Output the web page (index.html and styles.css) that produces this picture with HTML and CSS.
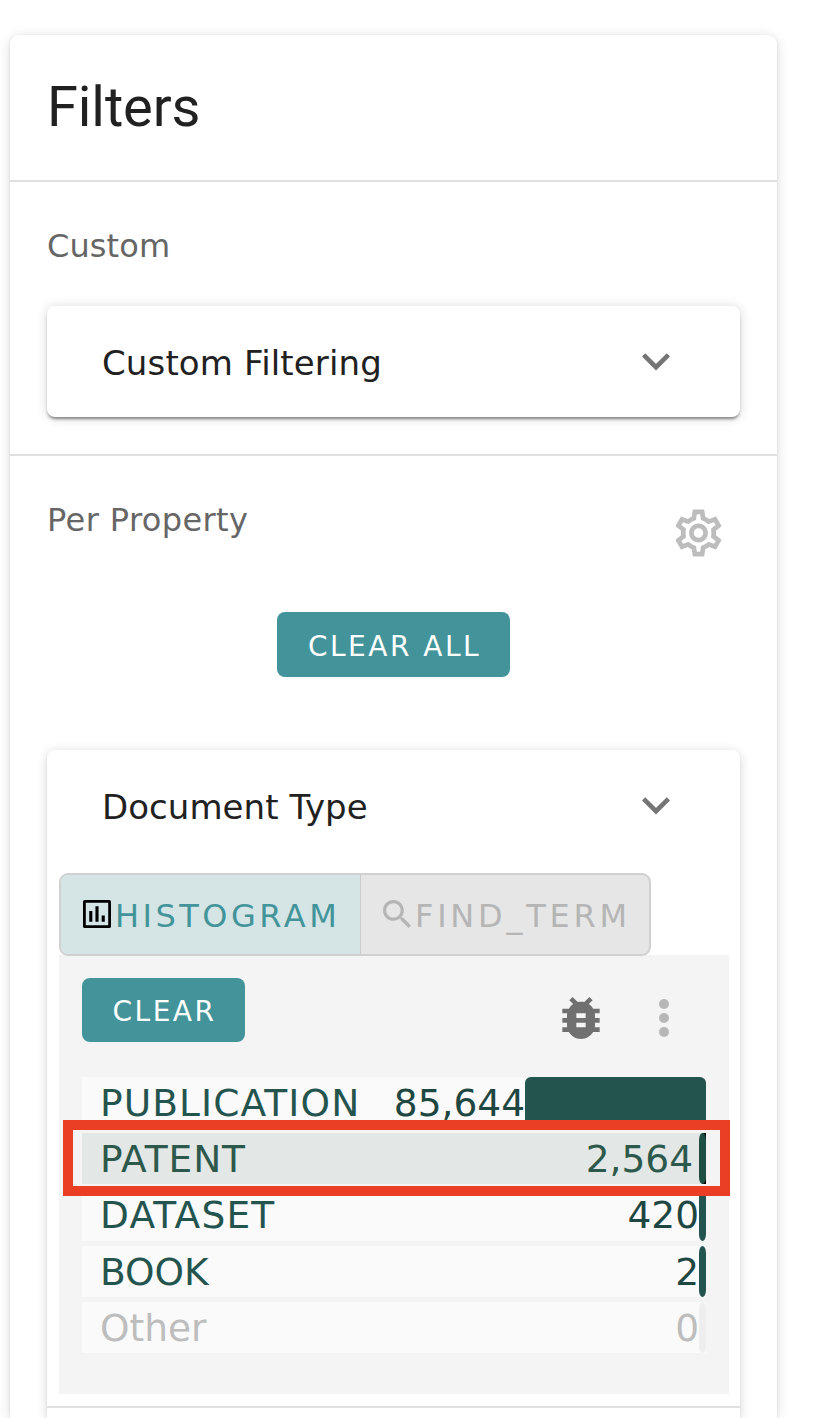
FILE: index.html
```html
<!DOCTYPE html>
<html lang="en">
<head>
<meta charset="utf-8">
<title>Filters</title>
<link rel="stylesheet" href="styles.css">
</head>
<body>
<main class="filters">
  <header class="filters-header"><h1 class="title">Filters</h1></header>
  <section class="section custom">
    <h2 class="label"><span class="t-custom">Custom</span></h2>
    <div class="card closed">
      <div class="card-head"><span class="t-cf">Custom Filtering</span>
        <svg class="chevron" viewBox="0 0 28 18"><path d="M1.6 1.8 14 14.2 26.4 1.8" fill="none" stroke="#757575" stroke-width="4.6"/></svg>
      </div>
    </div>
  </section>
  <section class="section property">
    <div class="property-head">
      <h2 class="label"><span class="t-pp">Per Property</span></h2>
      <svg class="gear" viewBox="2 2 20 20" fill="#bdbdbd"><path d="M19.43 12.98c.04-.32.07-.64.07-.98s-.03-.66-.07-.98l2.11-1.65c.19-.15.24-.42.12-.64l-2-3.46c-.09-.16-.26-.25-.44-.25-.06 0-.12.01-.17.03l-2.49 1c-.52-.4-1.08-.73-1.69-.98l-.38-2.65C14.46 2.18 14.25 2 14 2h-4c-.25 0-.46.18-.49.42l-.38 2.65c-.61.25-1.17.59-1.69.98l-2.49-1c-.06-.02-.12-.03-.18-.03-.17 0-.34.09-.43.25l-2 3.46c-.13.22-.07.49.12.64l2.11 1.65c-.04.32-.07.65-.07.98s.03.66.07.98l-2.11 1.65c-.19.15-.24.42-.12.64l2 3.46c.09.16.26.25.44.25.06 0 .12-.01.17-.03l2.49-1c.52.4 1.08.73 1.69.98l.38 2.65c.03.24.24.42.49.42h4c.25 0 .46-.18.49-.42l.38-2.65c.61-.25 1.17-.59 1.69-.98l2.49 1c.06.02.12.03.18.03.17 0 .34-.09.43-.25l2-3.46c.12-.22.07-.49-.12-.64l-2.11-1.65zm-1.98-1.71c.04.31.05.52.05.73s-.02.43-.05.73l-.14 1.13.89.7 1.08.84-.7 1.21-1.27-.51-1.04-.42-.9.68c-.43.32-.84.56-1.25.73l-1.06.43-.16 1.13-.2 1.35h-1.4l-.19-1.35-.16-1.13-1.06-.43c-.43-.18-.83-.41-1.23-.71l-.91-.7-1.06.43-1.27.51-.7-1.21 1.08-.84.89-.7-.14-1.13c-.03-.31-.05-.54-.05-.74s.02-.43.05-.73l.14-1.13-.89-.7-1.08-.84.7-1.21 1.27.51 1.04.42.9-.68c.43-.32.84-.56 1.25-.73l1.06-.43.16-1.13.2-1.35h1.39l.19 1.35.16 1.13 1.06.43c.43.18.83.41 1.23.71l.91.7 1.06-.43 1.27-.51.7 1.21-1.07.85-.89.7.14 1.13zM12 8c-2.21 0-4 1.79-4 4s1.79 4 4 4 4-1.79 4-4-1.79-4-4-4zm0 6c-1.1 0-2-.9-2-2s.9-2 2-2 2 .9 2 2-.9 2-2 2z"/></svg>
    </div>
    <button class="btn clear-all">CLEAR ALL</button>
    <div class="card open">
      <div class="card-head"><span class="t-dt">Document Type</span>
        <svg class="chevron" viewBox="0 0 28 18"><path d="M1.6 1.8 14 14.2 26.4 1.8" fill="none" stroke="#757575" stroke-width="4.6"/></svg>
      </div>
      <div class="tabs">
        <div class="tab active"><svg class="ti" viewBox="3 3 18 18"><path fill-rule="evenodd" d="M4.2 3h15.6Q21 3 21 4.2v15.6q0 1.2-1.2 1.2H4.2Q3 21 3 19.8V4.2Q3 3 4.2 3zM4.8 4.8v14.4h14.4V4.8zM7 10h2v7H7zM11 7h2v10h-2zM15 13h2v4h-2z"/></svg><span class="t-hi">HISTOGRAM</span></div>
        <div class="tab idle"><svg class="ti" viewBox="3 3 17.5 17.5" fill="#b5b5b5"><path d="M15.5 14h-.79l-.28-.27C15.41 12.59 16 11.11 16 9.5 16 5.91 13.09 3 9.5 3S3 5.91 3 9.5 5.91 16 9.5 16c1.61 0 3.09-.59 4.23-1.57l.27.28v.79l5 4.99L20.49 19l-4.99-5zm-6 0C7.01 14 5 11.99 5 9.5S7.01 5 9.5 5 14 7.01 14 9.5 11.99 14 9.5 14z"/></svg><span class="t-ft">FIND_TERM</span></div>
      </div>
      <div class="facet">
        <div class="toolbar">
          <button class="btn clear">CLEAR</button>
          <svg class="bug" viewBox="4 3 16 18" fill="#707070"><path d="M20 8h-2.81c-.45-.78-1.07-1.45-1.82-1.96L17 4.41 15.59 3l-2.17 2.17C12.96 5.06 12.49 5 12 5s-.96.06-1.41.17L8.41 3 7 4.41l1.62 1.63C7.88 6.55 7.26 7.22 6.81 8H4v2h2.09c-.05.33-.09.66-.09 1v1H4v2h2v1c0 .34.04.67.09 1H4v2h2.81c1.04 1.79 2.97 3 5.19 3s4.15-1.21 5.19-3H20v-2h-2.09c.05-.33.09-.66.09-1v-1h2v-2h-2v-1c0-.34-.04-.67-.09-1H20V8zm-6 8h-4v-2h4v2zm0-4h-4v-2h4v2z"/></svg>
          <svg class="dots" viewBox="0 0 10 38" fill="#b7b7b7"><circle cx="5" cy="5" r="5"/><circle cx="5" cy="19" r="5"/><circle cx="5" cy="33" r="5"/></svg>
        </div>
        <div class="rows">
          <div class="row"><span class="name n1">PUBLICATION</span><span class="num">85,644</span><i class="bar wide"></i></div>
          <div class="row selected"><span class="name n2">PATENT</span><span class="num">2,564</span><b class="end"><i class="bar"></i></b></div>
          <div class="row"><span class="name n3">DATASET</span><span class="num">420</span><i class="bar"></i></div>
          <div class="row"><span class="name">BOOK</span><span class="num">2</span><i class="bar"></i></div>
          <div class="row other"><span class="name">Other</span><span class="num">0</span><i class="bar"></i></div>
          <div class="highlight"></div>
        </div>
      </div>
    </div>
  </section>
</main>
</body>
</html>
```
FILE: styles.css
```css
* { box-sizing: border-box; }
html, body { margin: 0; height: 1418px; overflow: hidden; background: #fff; }
body { padding: 35px 43px 0 10px; font-family: Verdana, "DejaVu Sans", sans-serif; color: #212121; }
svg { display: block; flex: none; }
h1, h2 { margin: 0; font-weight: 400; }

.filters { height: 1383px; border-radius: 9px 9px 0 0; box-shadow: 0 1px 3px rgba(0,0,0,.13), 0 2px 14px rgba(0,0,0,.13); }
.filters-header { height: 147px; padding: 39px 37px 0; border-bottom: 2px solid #e0e0e0; }
.title { font: 400 56px/66px Roboto, sans-serif; letter-spacing: -.1px; color: #212121; }
.section { padding: 0 37px; }
.custom { height: 274px; border-bottom: 2px solid #e0e0e0; }
.label { padding-top: 43px; font-size: 32px; line-height: 42px; color: #666; white-space: nowrap; }
.t-custom { letter-spacing: .1px; }
.t-pp { letter-spacing: .4px; }
.t-cf { letter-spacing: .13px; }
.t-dt { letter-spacing: .05px; }

.card { border-radius: 8px; background: #fff; }
.closed { margin-top: 39px; height: 111px; box-shadow: 0 3px 3px -1px rgba(20,35,30,.5), 0 1px 12px rgba(0,0,0,.16); }
.open { height: 668px; border-radius: 8px 8px 0 0; margin-top: 73px; box-shadow: 0 1px 2px rgba(0,0,0,.1), 0 2px 12px rgba(0,0,0,.16); }
.card-head { display: flex; justify-content: space-between; align-items: center; height: 111px; padding: 3px 70px 0 55px; font-size: 34px; white-space: nowrap; }
.chevron { width: 28px; height: 18px; margin-top: -2px; }

.property-head { display: flex; justify-content: space-between; height: 156px; }
.gear { width: 47px; height: 48px; margin: 53px 18.5px 0 0; }
.btn { display: block; border: 0; padding: 4px 0 0 2px; border-radius: 8px; background: #43949a; color: #fff; font-family: inherit; font-size: 28px; letter-spacing: 2.5px; text-align: center; white-space: nowrap; }
.clear-all { width: 233px; height: 65px; margin-left: 230px; }

.tabs { position: relative; z-index: 1; display: flex; width: 592px; height: 83px; margin: 12px 0 -1px 12px; border: 2px solid #d0d0d0; border-radius: 9px; background: #e6e6e6; overflow: hidden; font-size: 32px; white-space: nowrap; }
.tab { display: flex; align-items: center; padding-left: 22px; }
.active { width: 300px; background: #d5e5e5; color: #43949a; border-right: 1px solid #ccc; }
.idle { color: #b5b5b5; }
.ti { width: 28px; height: 28px; margin-top: -1px; }
.tab span { margin: 3px 0 0 4px; }
.t-hi { letter-spacing: 3.5px; }
.t-ft { letter-spacing: 3.75px; }

.facet { width: 670px; height: 439px; margin-left: 12px; padding: 23px; background: #f4f4f4; }
.toolbar { display: flex; height: 99px; }
.clear { width: 163px; height: 64px; padding-top: 2px; }
.bug { width: 38px; height: 42px; margin: 19px 0 0 317px; }
.dots { width: 10px; height: 38px; margin: 21px 0 0 59px; }

.rows { position: relative; display: grid; grid-auto-rows: 51px; row-gap: 5.35px; }
.row { display: flex; align-items: center; background: #fafafa; font-size: 37.5px; color: #24544e; white-space: nowrap; }
.name { flex: 1; padding-left: 18px; }
.n1 { letter-spacing: 1.1px; }
.n2 { letter-spacing: .9px; }
.n3 { letter-spacing: 1.2px; }
.num { color: #1f4742; }
.bar { width: 7px; height: 51px; border-radius: 4px / 8px; background: #24544e; }
.wide { width: 181px; border-radius: 6px; }
.selected, .selected .num { color: #2c594b; }
.selected { background: #e3e7e5; }
.end { margin-left: 6px; background: linear-gradient(90deg, #e3e7e5 50%, #000 50%); }
.end .bar { display: block; background: #1f4f43; }
.other, .other .num { color: #bdbdbd; }
.other .bar { background: #eee; }
.highlight { position: absolute; left: -19px; top: 43px; width: 667px; height: 76px; border: 10px solid #ea3f25; }

.open::after { content: ""; display: block; margin-top: 12px; border-top: 2px solid #e0e0e0; }
```
